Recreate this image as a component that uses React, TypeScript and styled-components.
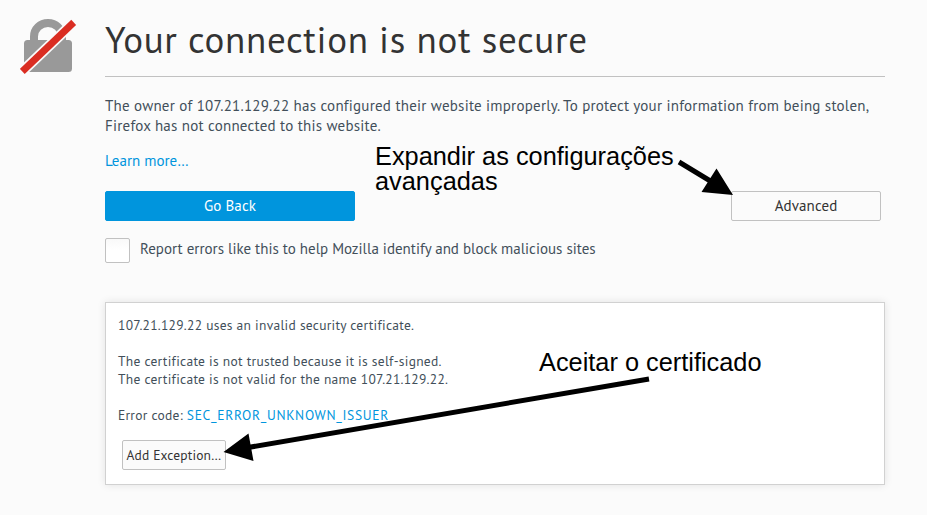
import React from "react";
import styled, { createGlobalStyle } from "styled-components";

const GlobalStyle = createGlobalStyle`
  * { box-sizing: border-box; }
  body {
    margin: 0;
    background: #fbfbfb;
    color: #424f5a;
    font-family: "PT Sans", "Noto Sans", sans-serif;
    font-size: 15px;
    letter-spacing: 0.23px;
    line-height: 20px;
  }
`;

const Page = styled.main`
  position: relative;
  display: grid;
  grid-template-columns: 85px 780px;
  width: 927px;
  height: 515px;
  padding: 18px 0 0 20px;
  overflow: hidden;
`;

const LockIcon = styled.svg`
  display: block;
  width: 58px;
  height: 58px;
`;

const Content = styled.div`
  display: flex;
  flex-direction: column;
`;

const Title = styled.h1`
  height: 59px;
  margin: 0;
  border-bottom: 1px solid #c1c1c1;
  color: #333;
  font-size: 37px;
  font-weight: 400;
  letter-spacing: 0.67px;
  line-height: 42px;
  white-space: nowrap;
`;

const Description = styled.p`
  margin: 19px 0 15px;
  white-space: nowrap;
`;

const Link = styled.a`
  color: #0095dd;
  text-decoration: none;
`;

const LearnMore = styled(Link)`
  letter-spacing: 0;
`;

const ErrorCode = styled(Link)`
  letter-spacing: 0.7px;
`;

const ButtonRow = styled.div`
  display: flex;
  justify-content: space-between;
  margin-top: 20px;
  padding-right: 4px;
`;

const Button = styled.button<{ $width: number; $primary?: boolean; $small?: boolean }>`
  width: ${(p) => p.$width}px;
  height: 30px;
  padding: 0;
  border: 1px solid ${(p) => (p.$primary ? "#0095dd" : "#c1c1c1")};
  border-radius: 2px;
  background: ${(p) => (p.$primary ? "#0095dd" : "#fbfbfb")};
  color: ${(p) => (p.$primary ? "#fff" : "#333")};
  font: inherit;
  font-size: ${(p) => (p.$small ? "13.5px" : "15px")};
  letter-spacing: ${(p) => (p.$small ? "0.15px" : "0.1px")};
  line-height: 28px;
  white-space: nowrap;
`;

const ReportRow = styled.label`
  display: flex;
  gap: 10px;
  margin-top: 17px;
  letter-spacing: 0.01px;
  line-height: 22px;
`;

const Checkbox = styled.input`
  appearance: none;
  width: 25px;
  height: 25px;
  margin: 0;
  border: 1px solid #c1c1c1;
  border-radius: 2px;
  background: linear-gradient(#f9f9f9, #fff 50%);
`;

const Panel = styled.section`
  height: 183px;
  margin-top: 39px;
  padding: 13px 12px;
  border: 1px solid #d1d1d1;
  background: #fff;
  box-shadow: 0 0 8px rgba(0, 0, 0, 0.1);
  font-size: 13.5px;
  letter-spacing: 0.27px;
  line-height: 18px;
`;

const Details = styled.p`
  margin: 0 0 18px;
`;

const ExceptionRow = styled.div`
  margin: -2px 0 0 4px;
`;

const Note = styled.p<{ $x: number; $y: number }>`
  position: absolute;
  left: ${(p) => p.$x}px;
  top: ${(p) => p.$y}px;
  margin: 0;
  color: #000;
  font: 25.35px/25px "Liberation Sans", Arial, sans-serif;
  letter-spacing: 0;
  white-space: nowrap;
`;

const Arrows = styled.svg`
  position: absolute;
  left: 0;
  top: 0;
  pointer-events: none;
`;

export default function App() {
  return (
    <>
      <GlobalStyle />
      <Page>
        <LockIcon viewBox="20 18 58 58" aria-hidden="true">
          <path
            d="M34 42V36.500a14 13.500 0 0 1 28 0V42"
            fill="none"
            stroke="#999"
            strokeWidth="8"
          />
          <rect x="24" y="40" width="48" height="32" rx="3.5" fill="#999" />
          <path d="M16 77.400L80 16.400" stroke="#fbfbfb" strokeWidth="10.5" />
          <path d="M22.3 71.4L73.7 22.4" stroke="#da2d22" strokeWidth="7" />
        </LockIcon>
        <Content>
          <Title>Your connection is not secure</Title>
          <Description>
            The owner of 107.21.129.22 has configured their website improperly. To protect your information from being stolen,
            <br />
            Firefox has not connected to this website.
          </Description>
          <LearnMore>Learn more…</LearnMore>
          <ButtonRow>
            <Button $width={250} $primary>Go Back</Button>
            <Button $width={150}>Advanced</Button>
          </ButtonRow>
          <ReportRow>
            <Checkbox type="checkbox" />
            Report errors like this to help Mozilla identify and block malicious sites
          </ReportRow>
          <Panel>
            <Details>107.21.129.22 uses an invalid security certificate.</Details>
            <Details>
              The certificate is not trusted because it is self-signed.
              <br />
              The certificate is not valid for the name 107.21.129.22.
            </Details>
            <Details>
              Error code: <ErrorCode>SEC_ERROR_UNKNOWN_ISSUER</ErrorCode>
            </Details>
            <ExceptionRow>
              <Button $width={104} $small>Add Exception…</Button>
            </ExceptionRow>
          </Panel>
        </Content>
        <Note $x={375} $y={144}>
          Expandir as configurações
          <br />
          avançadas
        </Note>
        <Note $x={539} $y={350}>Aceitar o certificado</Note>
        <Arrows width="927" height="515" aria-hidden="true">
          <path d="M679 162L712 182M649 379L248 447.5" stroke="#000" strokeWidth="5" />
          <path d="M733 195L701.5 192L716.5 168.5ZM223.500 452L248.500 433.500L253.500 461Z" />
        </Arrows>
      </Page>
    </>
  );
}
